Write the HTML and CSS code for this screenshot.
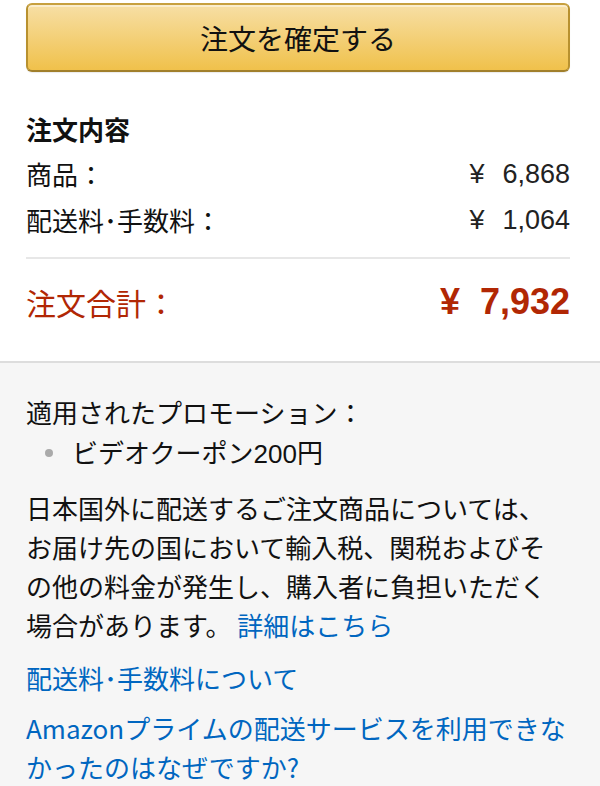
FILE: index.html
```html
<!DOCTYPE html>
<html lang="ja">
<head>
  <meta charset="UTF-8">
  <title>注文の確定</title>
  <link rel="stylesheet" href="styles.css">
</head>
<body>

  <!-- 注文確定ボタンと金額 -->
  <div class="order-box">
    <button class="place-order">注文を確定する</button>

    <h3 class="summary-title">注文内容</h3>
    <div class="summary-row">
      <span>商品：</span>
      <span class="price"><span class="yen">¥</span>6,868</span>
    </div>
    <div class="summary-row">
      <span>配送料･手数料：</span>
      <span class="price"><span class="yen">¥</span>1,064</span>
    </div>

    <div class="summary-total">
      <span>注文合計：</span>
      <span class="price total-price"><span class="yen">¥</span>7,932</span>
    </div>
  </div>

  <!-- 注意事項とリンク -->
  <div class="notes">
    <div>適用されたプロモーション：</div>
    <ul class="promo-list">
      <li>ビデオクーポン<span class="num">200</span>円</li>
    </ul>

    <p class="import-note">日本国外に配送するご注文商品については、お届け先の国において輸入税、関税およびその他の料金が発生し、購入者に負担いただく場合があります。 <a href="#">詳細はこちら</a></p>

    <p class="note-link"><a href="#">配送料･手数料について</a></p>
    <p class="note-link prime"><a href="#">Amazonプライムの配送サービスを利用できなかったのはなぜですか?</a></p>
  </div>

</body>
</html>
```

FILE: styles.css
```css
body { margin: 0; background: #fff; color: #111; font-family: "Noto Sans CJK JP", "Liberation Sans", sans-serif; font-size: 26px; }
a { color: #0066c0; text-decoration: none; }
.num, .price { font-family: "Liberation Sans", Arial, sans-serif; }

.order-box { padding: 3px 30px 34px 26px; border-bottom: 2px solid #dddddd; }
.place-order { display: block; width: 100%; height: 69px; border: 2px solid; border-color: #c7a03f #b8912f #a17f2b; border-radius: 6px; background: linear-gradient(to bottom, #f7dfa5, #f0c14b); box-shadow: inset 0 2px 0 rgba(255,255,255,0.45), 0 1px 1px rgba(0,0,0,0.08); font-family: inherit; font-size: 28px; color: #111; cursor: pointer; }

.summary-title { margin: 35px 0 0; font-size: 26px; font-weight: bold; line-height: 44px; }
.summary-row { display: flex; justify-content: space-between; line-height: 46px; }
.price { font-size: 27px; color: #222; }
.yen { margin-right: 18px; }

.summary-total { display: flex; justify-content: space-between; align-items: center; margin-top: 14px; padding-top: 18px; border-top: 2px solid #e7e7e7; color: #b12704; font-size: 30px; line-height: 50px; }
.total-price { font-size: 36px; font-weight: bold; color: #b12704; }
.total-price .yen { margin-right: 20px; }

.notes { background: #f6f6f6; padding: 29px 30px 20px 26px; line-height: 40px; }
.promo-list { margin: 0; padding-left: 46px; list-style: none; }
.promo-list li { position: relative; }
.promo-list li::before { content: ""; position: absolute; left: -27px; top: 17px; width: 8px; height: 8px; border-radius: 50%; background: #aaa; }
.import-note { margin: 14px 0 0; line-height: 39px; }
.note-link { margin: 14px 0 0; }
.prime { margin-top: 10px; line-height: 39px; }
```
